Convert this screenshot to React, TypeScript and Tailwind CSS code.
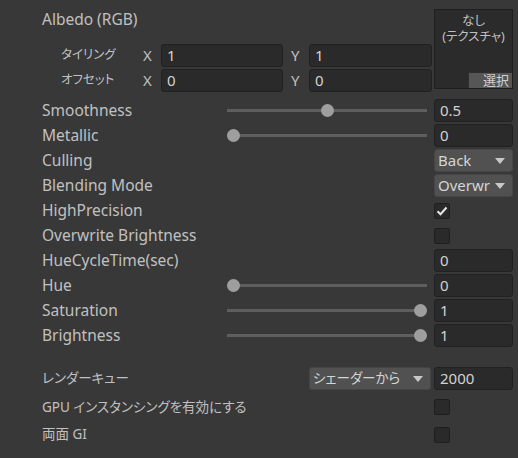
import React from 'react';

const FONT = "font-['Noto_Sans','Noto_Sans_CJK_JP',sans-serif] [font-feature-settings:'palt']";

// 数値フィールド
function Field({ value, className = '' }: { value: string; className?: string }) {
  return (
    <div
      className={`h-[23px] bg-[#2a2a2a] border border-[#212121] rounded-[3px] pl-[5px] flex items-center text-[15px] text-[#d2d2d2] ${className}`}
    >
      {value}
    </div>
  );
}

function Arrow() {
  return (
    <svg width="10" height="6" viewBox="0 0 10 6" className="shrink-0">
      <path d="M0 0 H10 L5 6 Z" fill="#c8c8c8" />
    </svg>
  );
}

function Dropdown({ value, className = '', textClass = 'text-[15px]' }: { value: string; className?: string; textClass?: string }) {
  return (
    <div
      className={`h-[23px] bg-[#515151] border border-[#454545] rounded-[3px] pl-[3px] pr-[7px] flex items-center justify-between text-[#d4d4d4] ${textClass} ${className}`}
    >
      <span className="whitespace-nowrap overflow-hidden">{value}</span>
      <Arrow />
    </div>
  );
}

function Checkbox({ checked = false }: { checked?: boolean }) {
  return (
    <div className="w-[16px] h-[16px] bg-[#2a2a2a] border border-[#1f1f1f] rounded-[2px] flex items-center justify-center">
      {checked && (
        <svg width="12" height="10" viewBox="0 0 12 10">
          <path d="M1.5 5.2 L4.5 8.2 L10.5 1.5" stroke="#e6e6e6" strokeWidth="2" fill="none" />
        </svg>
      )}
    </div>
  );
}

function Slider({ value }: { value: number }) {
  return (
    <div className="relative w-[200px] h-[13px] flex items-center">
      <div className="w-full h-[3px] bg-[#5e5e5e]" />
      <div
        className="absolute top-0 w-[13px] h-[13px] rounded-full bg-[#9e9e9e]"
        style={{ left: value * 187 }}
      />
    </div>
  );
}

function Row({ label, children }: { label: string; children?: React.ReactNode }) {
  return (
    <div className="h-[25px] flex items-center pr-[5px]">
      <div className="flex-1 pl-[42px] text-[15.5px] text-[#c0c0c0] whitespace-nowrap">{label}</div>
      {children}
    </div>
  );
}

function SliderRow({ label, value, text }: { label: string; value: number; text: string }) {
  return (
    <Row label={label}>
      <Slider value={value} />
      <Field value={text} className="ml-[7px] w-[79px]" />
    </Row>
  );
}

export default function App() {
  return (
    <div className={`w-[518px] h-[458px] bg-[#383838] overflow-hidden ${FONT}`}>
      {/* Albedo + テクスチャ */}
      <div className="flex pt-[9px] pr-[5px]">
        <div className="flex-1">
          <div className="h-[22px] flex items-center pl-[42px] text-[15.5px] text-[#c0c0c0]">Albedo (RGB)</div>
          <div className="mt-[13px] flex flex-col gap-[2px]">
            {[
              ['タイリング', '1', '1'],
              ['オフセット', '0', '0'],
            ].map(([label, x, y]) => (
              <div key={label} className="h-[23px] flex items-center">
                <div className="w-[143px] pl-[61px] text-[12.5px] text-[#c0c0c0]">{label}</div>
                <div className="w-[18px] text-[15px] text-[#c0c0c0]">X</div>
                <Field value={x} className="w-[122px]" />
                <div className="ml-[8px] w-[18px] text-[15px] text-[#c0c0c0]">Y</div>
                <Field value={y} className="w-[123px]" />
              </div>
            ))}
          </div>
        </div>
        <div className="ml-[2px] w-[79px] h-[80px] bg-[#2b2b2b] border border-[#1f1f1f] flex flex-col">
          <div className="flex-1 pt-[3px] text-center text-[12.5px] leading-[16px] text-[#c0c0c0]">
            <div>なし</div>
            <div>(テクスチャ)</div>
          </div>
          <div className="self-end w-[44px] h-[16px] bg-[#565656] border-l border-t border-[#2f2f2f] text-[13px] leading-[15px] text-[#d0d0d0] text-right pr-[3px]">
            選択
          </div>
        </div>
      </div>

      {/* プロパティ */}
      <div className="mt-[6px]">
        <SliderRow label="Smoothness" value={0.5} text="0.5" />
        <SliderRow label="Metallic" value={0} text="0" />
        <Row label="Culling">
          <Dropdown value="Back" className="w-[79px]" />
        </Row>
        <Row label="Blending Mode">
          <Dropdown value="Overwr" className="w-[79px]" />
        </Row>
        <Row label="HighPrecision">
          <div className="w-[79px]">
            <Checkbox checked />
          </div>
        </Row>
        <Row label="Overwrite Brightness">
          <div className="w-[79px]">
            <Checkbox />
          </div>
        </Row>
        <Row label="HueCycleTime(sec)">
          <Field value="0" className="w-[79px]" />
        </Row>
        <SliderRow label="Hue" value={0} text="0" />
        <SliderRow label="Saturation" value={1} text="1" />
        <SliderRow label="Brightness" value={1} text="1" />
      </div>

      {/* レンダーキュー */}
      <div className="mt-[18px]">
        <div className="h-[25px] flex items-center pr-[5px]">
          <div className="flex-1 pl-[42px] text-[13.5px] text-[#c0c0c0]">レンダーキュー</div>
          <Dropdown value="シェーダーから" className="w-[122px]" textClass="text-[13.5px]" />
          <Field value="2000" className="ml-[3px] w-[79px]" />
        </div>
        <div className="mt-[2px] h-[28px] flex items-center pr-[5px]">
          <div className="flex-1 pl-[42px] text-[13.5px] text-[#c0c0c0]">GPU インスタンシングを有効にする</div>
          <div className="w-[79px]">
            <Checkbox />
          </div>
        </div>
        <div className="h-[27px] flex items-center pr-[5px]">
          <div className="flex-1 pl-[42px] text-[13.5px] text-[#c0c0c0]">両面 GI</div>
          <div className="w-[79px]">
            <Checkbox />
          </div>
        </div>
      </div>
    </div>
  );
}
